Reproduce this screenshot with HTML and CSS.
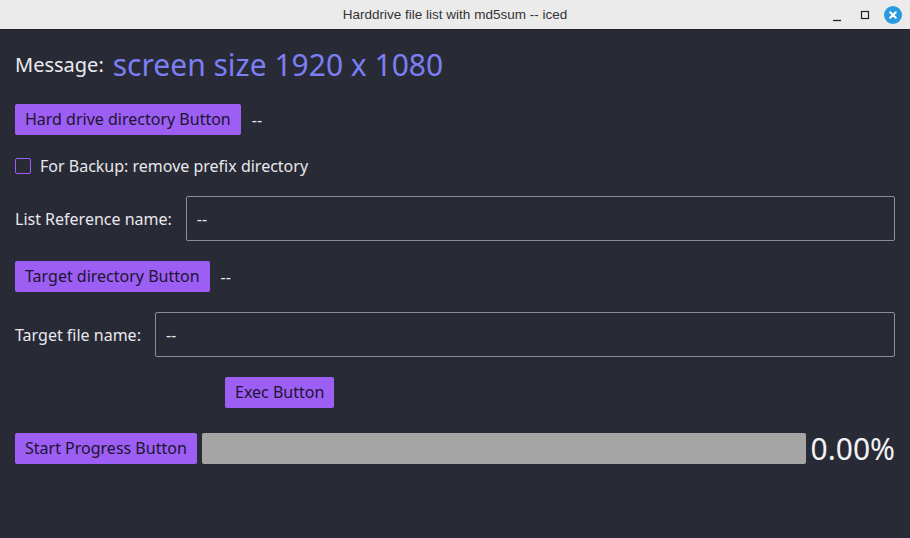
FILE: index.html
```html
<!DOCTYPE html>
<html>
<head>
<meta charset="utf-8">
<link rel="stylesheet" href="styles.css">
</head>
<body>
<div class="window">
  <header class="titlebar">
    <span class="title">Harddrive file list with md5sum -- iced</span>
    <div class="controls">
      <svg class="ctl" width="18" height="18" viewBox="0 0 18 18"><path d="M5 14.5h8" stroke="#222" stroke-width="1.3"/></svg>
      <svg class="ctl" width="18" height="18" viewBox="0 0 18 18"><rect x="5.5" y="5.5" width="7" height="7" fill="none" stroke="#222" stroke-width="1.2"/></svg>
      <svg class="ctl" width="18" height="18" viewBox="0 0 18 18"><circle cx="9" cy="9" r="9" fill="#2a9ae0"/><path d="M6.2 6.2l5.6 5.6M11.8 6.2l-5.6 5.6" stroke="#fff" stroke-width="2" stroke-linecap="round"/></svg>
    </div>
  </header>
  <main class="content">
    <div class="row msg-row">
      <span class="msg-label">Message:</span>
      <span class="msg-text">screen size 1920 x 1080</span>
    </div>
    <div class="row">
      <button class="btn">Hard drive directory Button</button>
      <span class="value">--</span>
    </div>
    <label class="row check-row">
      <span class="checkbox"></span>
      <span class="text">For Backup: remove prefix directory</span>
    </label>
    <div class="row field-row">
      <span class="text">List Reference name:</span>
      <div class="input">--</div>
    </div>
    <div class="row">
      <button class="btn">Target directory Button</button>
      <span class="value">--</span>
    </div>
    <div class="row field-row">
      <span class="text">Target file name:</span>
      <div class="input">--</div>
    </div>
    <div class="row exec-row">
      <button class="btn">Exec Button</button>
    </div>
    <div class="row progress-row">
      <button class="btn">Start Progress Button</button>
      <div class="progress"><div class="bar" style="width:0%"></div></div>
      <span class="percent">0.00%</span>
    </div>
  </main>
</div>
</body>
</html>
```

FILE: styles.css
```css
* { box-sizing: border-box; }
html, body { margin: 0; padding: 0; }
body {
  width: 910px;
  height: 538px;
  overflow: hidden;
  font-family: "Noto Sans", "Open Sans", sans-serif;
  background: #282a36;
}
.window {
  width: 910px;
  height: 538px;
  display: flex;
  flex-direction: column;
}
.titlebar {
  height: 30px;
  flex: none;
  background: #ebebeb;
  border-bottom: 1px solid #1f2029;
  position: relative;
  display: flex;
  align-items: center;
  justify-content: center;
}
.title {
  font-family: "Liberation Sans", "Noto Sans", sans-serif;
  font-size: 13.5px;
  color: #333;
}
.controls {
  position: absolute;
  right: 8px;
  top: 6px;
  display: flex;
  align-items: center;
  gap: 10px;
}
.content {
  flex: 1;
  padding: 15px 15px 0 15px;
  display: flex;
  flex-direction: column;
  gap: 20px;
  color: #e8e8ec;
}
.row {
  display: flex;
  align-items: center;
}
.msg-row {
  height: 39px;
  gap: 9px;
}
.msg-label {
  font-size: 20px;
  color: #ececef;
}
.msg-text {
  font-size: 30px;
  color: #7b7ff2;
}
.btn {
  font-family: "Noto Sans", sans-serif;
  font-size: 16px;
  height: 31px;
  padding: 0 10px;
  border: none;
  border-radius: 2px;
  background: #9d5ef4;
  color: #1c1430;
  line-height: 31px;
}
.row .value {
  font-size: 16px;
  margin-left: 11px;
}
.check-row {
  height: 21px;
  gap: 9px;
}
.checkbox {
  width: 16px;
  height: 16px;
  border: 1px solid #9d5ef4;
  border-radius: 2px;
}
.text { font-size: 16px; }
.field-row { gap: 14px; }
.input {
  flex: 1;
  height: 45px;
  border: 1px solid #8d8d93;
  border-radius: 2px;
  padding: 0 10px;
  display: flex;
  align-items: center;
  font-size: 16px;
}
.exec-row { padding-left: 210px; }
.progress-row {
  gap: 5px;
  height: 40px;
}
.progress {
  flex: 1;
  height: 31px;
  background: #a5a5a5;
  border-radius: 2px;
  overflow: hidden;
}
.bar { height: 100%; background: #9d5ef4; }
.percent {
  font-size: 30px;
  color: #f2f2f4;
  line-height: 31px;
}
```
